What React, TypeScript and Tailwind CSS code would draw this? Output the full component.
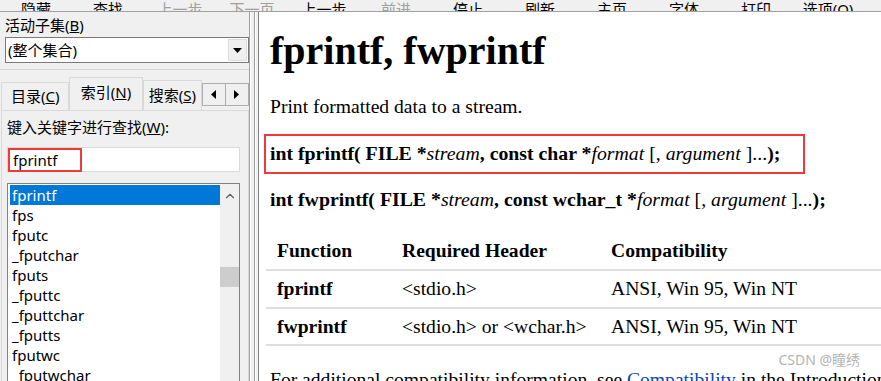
import { ChevronUp } from "lucide-react";

const toolbarItems = [
  { label: "隐藏", dim: false },
  { label: "查找", dim: false },
  { label: "上一步", dim: true },
  { label: "下一页", dim: true },
  { label: "上一步", dim: false },
  { label: "前进", dim: true },
  { label: "停止", dim: false },
  { label: "刷新", dim: false },
  { label: "主页", dim: false },
  { label: "字体", dim: false },
  { label: "打印", dim: false },
  { label: "选项(O)", dim: false },
];

const indexItems = [
  "fprintf",
  "fps",
  "fputc",
  "_fputchar",
  "fputs",
  "_fputtc",
  "_fputtchar",
  "_fputts",
  "fputwc",
  "_fputwchar",
];

const ui = { fontFamily: '"Noto Sans", "Noto Sans CJK SC", sans-serif' };
const serif = { fontFamily: '"Liberation Serif", "Times New Roman", serif' };

const App = () => {
  return (
    <div className="w-[881px] h-[381px] overflow-hidden bg-[#f0f0f0] flex flex-col text-black" style={ui}>
      {/* toolbar, only the bottom of the labels shows */}
      <div className="h-[12px] shrink-0 flex items-end overflow-hidden border-b border-[#a0a0a0]">
        {toolbarItems.map((item, i) => (
          <div
            key={i}
            className={`w-[72px] shrink-0 text-center text-[15px] leading-[20px] mb-[-8px] ${item.dim ? "text-[#a0a0a0]" : "text-black"}`}
          >
            {item.label}
          </div>
        ))}
      </div>

      <div className="flex flex-1 min-h-0">
        {/* left navigation pane */}
        <div className="w-[249px] shrink-0 flex flex-col text-[15px]">
          <div className="pl-[5px] pt-[3px] leading-[20px]">
            活动子集(<span className="underline">B</span>)
          </div>
          <div className="ml-[5px] mt-[2px] w-[244px] h-[26px] flex bg-white border border-[#7a7a7a]">
            <div className="flex-1 pl-[2px] leading-[24px]">(整个集合)</div>
            <div className="w-[19px] m-[1px] bg-[#f0f0f0] border border-[#dcdcdc] flex items-center justify-center">
              <svg width="9" height="5" viewBox="0 0 9 5">
                <path d="M0 0h9L4.5 5z" fill="#000" />
              </svg>
            </div>
          </div>
          <div className="mt-[6px] border-t border-[#d4d4d4]" />

          {/* tabs */}
          <div className="mt-[7px] h-[33px] flex items-end">
            <div className="w-[69px] h-[28px] ml-[1px] border border-b-0 border-[#d9d9d9] flex items-center justify-center">
              目录(<span className="underline">C</span>)
            </div>
            <div className="w-[74px] h-[33px] bg-[#f0f0f0] border border-b-0 border-[#d9d9d9] flex items-start pt-[3px] justify-center">
              索引(<span className="underline">N</span>)
            </div>
            <div className="w-[60px] h-[30px] border border-b-0 border-[#d9d9d9] flex items-center justify-center overflow-hidden whitespace-nowrap">
              搜索(<span className="underline">S</span>)
            </div>
            <div className="self-start mt-[6px] flex">
              <div className="w-[24px] h-[23px] bg-[#f0f0f0] border border-[#adadad] flex items-center justify-center">
                <svg width="5" height="9" viewBox="0 0 5 9">
                  <path d="M5 0v9L0 4.5z" fill="#000" />
                </svg>
              </div>
              <div className="w-[23px] h-[23px] bg-[#f0f0f0] border border-l-0 border-[#adadad] flex items-center justify-center">
                <svg width="5" height="9" viewBox="0 0 5 9">
                  <path d="M0 0v9L5 4.5z" fill="#000" />
                </svg>
              </div>
            </div>
          </div>

          {/* index tab panel */}
          <div className="flex-1 ml-[1px] border-l border-t border-r border-[#d9d9d9] pl-[5px] pr-[8px] flex flex-col">
            <div className="mt-[6px] leading-[20px] whitespace-nowrap">
              键入关键字进行查找(<span className="underline">W</span>):
            </div>
            <div className="mt-[10px] h-[25px] bg-white border border-[#d9d9d9] flex items-center">
              <div className="h-[24px] w-[74px] border-2 border-[#ee3a3a] pl-[3px] leading-[20px]">fprintf</div>
            </div>
            <div className="mt-[11px] flex-1 bg-white border border-[#828282] flex">
              <div className="flex-1 pt-[1px] pl-[2px]">
                {indexItems.map((name, i) => (
                  <div
                    key={name}
                    className={`h-[20px] leading-[20px] pl-[2px] ${i === 0 ? "bg-[#0078d7] text-white" : ""}`}
                  >
                    {name}
                  </div>
                ))}
              </div>
              <div className="w-[19px] bg-[#f0f0f0] flex flex-col items-center">
                <ChevronUp size={14} strokeWidth={2} className="mt-[5px] text-[#606060]" />
                <div className="mt-[64px] w-[19px] h-[20px] bg-[#cdcdcd]" />
              </div>
            </div>
          </div>
        </div>

        {/* splitter */}
        <div className="w-[9px] shrink-0 flex">
          <div className="w-[1px] bg-[#a0a0a0]" />
          <div className="w-[1px] bg-white" />
          <div className="w-[3px]" />
          <div className="w-[1px] bg-[#a0a0a0]" />
          <div className="w-[1px] bg-white" />
          <div className="w-[2px]" />
        </div>

        {/* topic pane */}
        <div className="flex-1 min-w-0 bg-white border-l border-[#828282] overflow-hidden relative" style={serif}>
          <div className="pl-[11px] whitespace-nowrap">
            <h1 className="text-[40px] font-bold leading-[46px] mt-[16px]">fprintf, fwprintf</h1>
            <p className="text-[19.6px] leading-[24px] mt-[21px]">Print formatted data to a stream.</p>
            <div className="mt-[15px] -ml-[6px] w-[541px] h-[40px] border-2 border-[#ee3a3a] pl-[4px] flex items-center text-[19.8px] font-bold">
              <span>
                int fprintf( FILE *<i className="font-normal">stream</i>, const char *<i className="font-normal">format</i>{" "}
                <span className="font-normal">
                  [, <i>argument</i> ]...
                </span>
                );
              </span>
            </div>
            <div className="mt-[13px] text-[19.8px] leading-[24px] font-bold">
              int fwprintf( FILE *<i className="font-normal">stream</i>, const wchar_t *<i className="font-normal">format</i>{" "}
              <span className="font-normal">
                [, <i>argument</i> ]...
              </span>
              );
            </div>
          </div>

          <table className="mt-[22px] ml-[7px] w-[700px] text-[19.6px] border-collapse">
            <thead>
              <tr className="border-b-2 border-[#dedede]">
                <th className="w-[125px] h-[37px] pl-[11px] text-left font-bold">Function</th>
                <th className="w-[209px] text-left font-bold pl-[11px]">Required Header</th>
                <th className="text-left font-bold pl-[11px]">Compatibility</th>
              </tr>
            </thead>
            <tbody>
              <tr className="border-b-2 border-[#dedede]">
                <td className="h-[38px] pl-[11px] font-bold">fprintf</td>
                <td className="pl-[11px]">&lt;stdio.h&gt;</td>
                <td className="pl-[11px]">ANSI, Win 95, Win NT</td>
              </tr>
              <tr className="border-b-2 border-[#dedede]">
                <td className="h-[37px] pl-[11px] font-bold">fwprintf</td>
                <td className="pl-[11px]">&lt;stdio.h&gt; or &lt;wchar.h&gt;</td>
                <td className="pl-[11px]">ANSI, Win 95, Win NT</td>
              </tr>
            </tbody>
          </table>

          <p className="pl-[11px] mt-[22px] text-[19.6px] leading-[24px] whitespace-nowrap">
            For additional compatibility information, see <span className="text-[#0645ad]">Compatibility</span> in the
            Introduction.
          </p>

          <div
            className="absolute right-[21px] bottom-[11px] text-[14px] text-[#b4b4b4]"
            style={ui}
          >
            CSDN @瞳绣
          </div>
        </div>
      </div>
    </div>
  );
};

export default App;
